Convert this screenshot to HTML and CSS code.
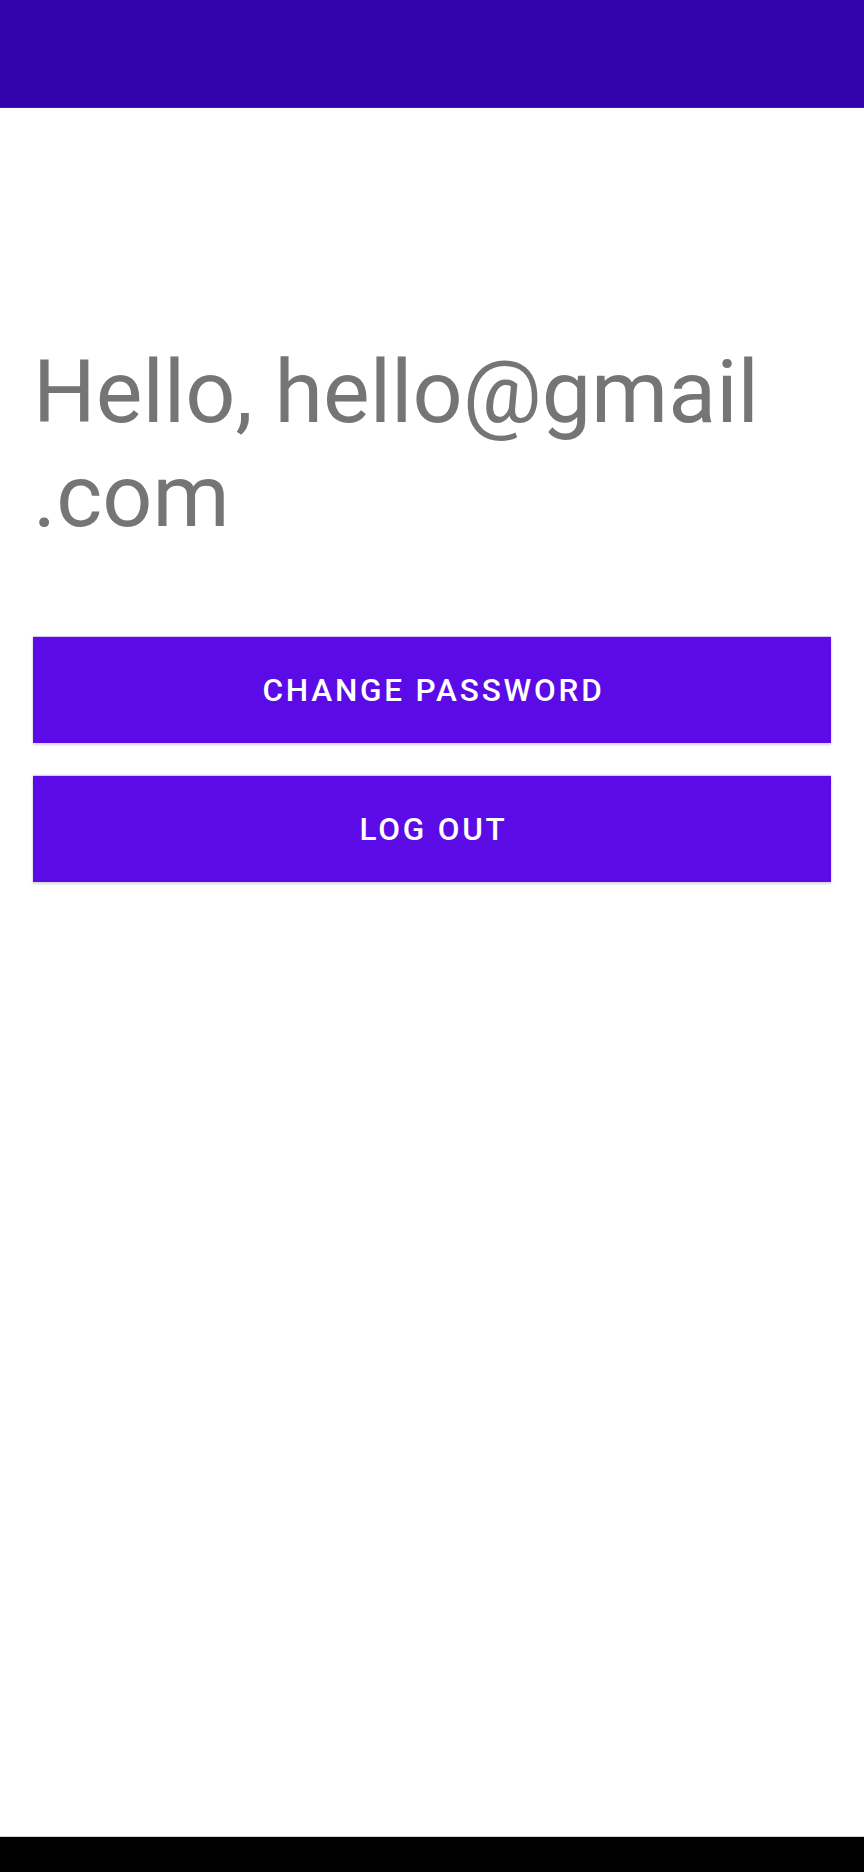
FILE: index.html
```html
<!DOCTYPE html>
<html lang="en">
<head>
<meta charset="utf-8">
<title>Profile</title>
<link rel="stylesheet" href="styles.css">
</head>
<body>
<div class="screen">
  <header class="app-bar"></header>
  <main class="content">
    <h1 class="greeting">Hello, hello@gmail<wbr>.com</h1>
    <div class="actions">
      <button class="btn" type="button">Change Password</button>
      <button class="btn" type="button">Log Out</button>
    </div>
  </main>
  <div class="nav-bar"></div>
</div>
</body>
</html>
```

FILE: styles.css
```css
html, body {
  margin: 0;
  padding: 0;
  background: #ffffff;
}

.screen {
  width: 864px;
  height: 1872px;
  display: flex;
  flex-direction: column;
  font-family: Roboto, "Noto Sans", sans-serif;
}

.app-bar {
  height: 108px;
  flex: none;
  background: #3303ac;
  border-bottom: 1px solid #4a14b8;
  box-sizing: border-box;
}

.content {
  flex: 1;
  padding: 232px 33px 0;
  display: flex;
  flex-direction: column;
}

.greeting {
  margin: 0;
  font-size: 88px;
  font-weight: 400;
  line-height: 104px;
  color: #757575;
}

.actions {
  margin-top: 89px;
  display: flex;
  flex-direction: column;
  gap: 33px;
}

.btn {
  height: 106px;
  width: 100%;
  border: none;
  border-radius: 0;
  background: #5b0ce6;
  color: #ffffff;
  font-family: Roboto, "Noto Sans", sans-serif;
  font-size: 31.5px;
  font-weight: 500;
  letter-spacing: 2.8px;
  text-transform: uppercase;
  box-shadow: 0 2px 2px rgba(0, 0, 0, 0.12), 0 1px 4px rgba(0, 0, 0, 0.08), 0 -1px 1px rgba(120, 60, 240, 0.25);
  padding: 0 0 0 3px;
}

.nav-bar {
  height: 36px;
  flex: none;
  background: #000000;
  border-top: 1px solid #d0d0d0;
  box-sizing: border-box;
}
```
